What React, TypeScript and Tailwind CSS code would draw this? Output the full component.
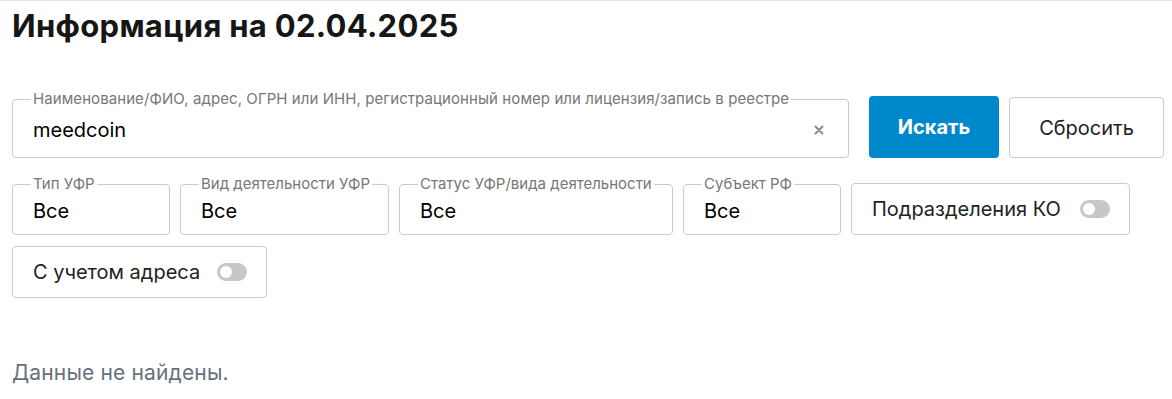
import React, { useState } from 'react';

const FONT = { fontFamily: 'Inter, "Noto Sans", sans-serif' };

interface SelectField {
  label: string;
  width: string;
}

const selects: SelectField[] = [
  { label: 'Тип УФР', width: 'w-[158px]' },
  { label: 'Вид деятельности УФР', width: 'w-[209px]' },
  { label: 'Статус УФР/вида деятельности', width: 'w-[274px]' },
  { label: 'Субъект РФ', width: 'w-[158px]' },
];

const Toggle: React.FC<{ on: boolean; onClick: () => void }> = ({ on, onClick }) => (
  <button
    type="button"
    onClick={onClick}
    className={`relative h-[18px] w-[30px] shrink-0 rounded-full ${on ? 'bg-[#0088cc]' : 'bg-[#c5c7cb]'}`}
  >
    <span
      className={`absolute top-[3px] h-[12px] w-[12px] rounded-full bg-white ${on ? 'left-[15px]' : 'left-[3px]'}`}
    />
  </button>
);

const ToggleBox: React.FC<{ label: string; width: string }> = ({ label, width }) => {
  const [on, setOn] = useState(false);
  return (
    <div
      className={`${width} flex h-[52px] items-center justify-between rounded-[4px] border border-[#cacaca] pl-[20px] pr-[19px]`}
    >
      <span className="whitespace-nowrap text-[20px] leading-[28px] text-[#222]">{label}</span>
      <Toggle on={on} onClick={() => setOn(!on)} />
    </div>
  );
};

export default function App() {
  const [query, setQuery] = useState('meedcoin');

  return (
    <div className="min-h-[399px] border-t border-[#e6e6e6] bg-white pl-[12px] pr-[8px] pt-[7px]" style={FONT}>
      <h1 className="text-[31px] font-bold leading-[36px] tracking-[0.3px] text-[#161616]">Информация на 02.04.2025</h1>

      <div className="mt-[48px] flex items-end">
        <fieldset className="w-[837px] min-w-0 shrink-0 rounded-[4px] border border-[#cacaca] px-[18px] pb-[13px] pt-[10px]">
          <legend className="whitespace-nowrap px-[2px] text-[15px] leading-[14px] tracking-[0.08px] text-[#777]">
            Наименование/ФИО, адрес, ОГРН или ИНН, регистрационный номер или лицензия/запись в реестре
          </legend>
          <div className="flex items-center justify-between pl-[2px]">
            <input
              value={query}
              onChange={(e) => setQuery(e.target.value)}
              className="h-[28px] min-w-0 flex-1 bg-transparent text-[20px] leading-[28px] text-black outline-none"
            />
            <button type="button" onClick={() => setQuery('')} className="mr-[6px] text-[#8a8a8a]">
              <svg width="10" height="10" viewBox="0 0 10 10">
                <path d="M1.5 1.5 L8.5 8.5 M8.5 1.5 L1.5 8.5" stroke="currentColor" strokeWidth="2" strokeLinecap="round" />
              </svg>
            </button>
          </div>
        </fieldset>
        <button
          type="button"
          className="ml-[20px] h-[62px] w-[130px] shrink-0 rounded-[4px] bg-[#0088cc] text-[20px] font-bold text-white"
        >
          Искать
        </button>
        <button
          type="button"
          className="ml-[10px] h-[61px] w-[155px] shrink-0 rounded-[4px] border border-[#cacaca] text-[20px] text-[#222]"
        >
          Сбросить
        </button>
      </div>

      <div className="mt-[19px] flex flex-wrap items-end gap-x-[10px] gap-y-[11px]">
        {selects.map((s) => (
          <fieldset
            key={s.label}
            className={`${s.width} min-w-0 rounded-[4px] border border-[#cacaca] pb-[9px] pl-[18px] pr-[8px] pt-[6px]`}
          >
            <legend className="whitespace-nowrap px-[2px] text-[15px] leading-[14px] text-[#777]">{s.label}</legend>
            <div className="pl-[2px] text-[20px] leading-[28px] text-black">Все</div>
          </fieldset>
        ))}
        <ToggleBox label="Подразделения КО" width="w-[279px]" />
        <ToggleBox label="С учетом адреса" width="w-[255px]" />
      </div>

      <p className="mt-[61px] text-[21px] leading-[28px] tracking-[0.15px] text-[#687080]">Данные не найдены.</p>
    </div>
  );
}
